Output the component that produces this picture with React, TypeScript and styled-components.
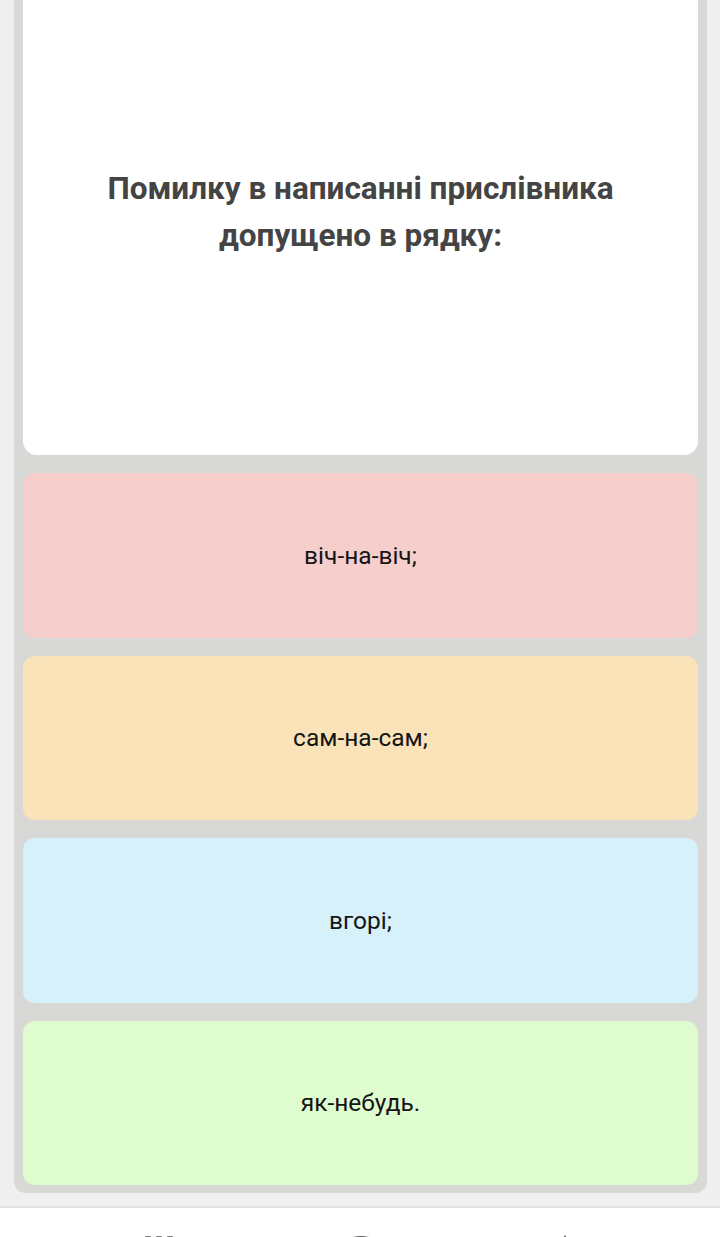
import React from "react";
import styled, { createGlobalStyle } from "styled-components";

const Global = createGlobalStyle`
  html, body { margin: 0; padding: 0; overflow: hidden; }
  body { background: #efefef; font-family: Roboto, "Noto Sans", Arial, sans-serif; }
`;

const Page = styled.div`
  width: 720px;
  height: 1237px;
  background: #efefef;
  display: flex;
  flex-direction: column;
  overflow: hidden;
`;

const Panel = styled.div`
  margin: -30px 13px 0 14px;
  padding: 0 9px 8px;
  background: #d8d8d6;
  border-radius: 0 0 12px 12px;
  display: flex;
  flex-direction: column;
  gap: 18px;
`;

const QuestionCard = styled.div`
  height: 485px;
  box-sizing: border-box;
  padding-bottom: 2px;
  background: #ffffff;
  border-radius: 0 0 14px 14px;
  display: flex;
  align-items: center;
  justify-content: center;
`;

const Question = styled.h1`
  margin: 0;
  font-family: Roboto, Arial, sans-serif;
  font-weight: 700;
  font-size: 31.5px;
  line-height: 47px;
  color: #444444;
  text-align: center;
`;

const Option = styled.div<{ $bg: string }>`
  height: 164.5px;
  background: ${(p) => p.$bg};
  border-radius: 12px;
  display: flex;
  align-items: center;
  justify-content: center;
  font-family: Roboto, Arial, sans-serif;
  font-size: 24.5px;
  color: #151515;
`;

const Spacer = styled.div`
  height: 13px;
  flex: none;
`;

const BottomNav = styled.nav`
  flex: none;
  height: 60px;
  background: #ffffff;
  border-top: 2px solid #e2e4e2;
  display: flex;
  padding-top: 27px;
  box-sizing: border-box;
`;

const NavRow = styled.div`
  position: relative;
  width: 100%;
  height: 20px;
`;

const Icon = styled.svg<{ $left: number }>`
  position: absolute;
  left: ${(p) => p.$left}px;
  top: 0;
`;

const options = [
  { text: "віч-на-віч;", bg: "#f6cfcd" },
  { text: "сам-на-сам;", bg: "#fae3b9" },
  { text: "вгорі;", bg: "#d7f1fa" },
  { text: "як-небудь.", bg: "#dffcce" },
];

export default function App() {
  return (
    <Page>
      <Global />
      <Panel>
        <QuestionCard>
          <Question>
            Помилку в написанні прислівника
            <br />
            допущено в рядку:
          </Question>
        </QuestionCard>
        {options.map((o) => (
          <Option key={o.text} $bg={o.bg}>
            {o.text}
          </Option>
        ))}
      </Panel>
      <Spacer />
      <BottomNav>
        <NavRow>
          <Icon $left={144} width="30" height="20" viewBox="0 0 30 20">
            <rect x="1" y="1" width="6" height="3" rx="1" fill="#7a7a7a" />
            <rect x="12" y="1" width="6" height="3" rx="1" fill="#7a7a7a" />
            <rect x="23" y="1" width="6" height="3" rx="1" fill="#7a7a7a" />
          </Icon>
          <Icon $left={347} width="28" height="20" viewBox="0 0 28 20">
            <path d="M3 3 Q14 -1 25 3 L25 6 L3 6 Z" fill="#5a5a5a" />
          </Icon>
          <Icon $left={560} width="10" height="20" viewBox="0 0 10 20">
            <path d="M5 0 L8 5 L2 5 Z" fill="#5a5a5a" />
          </Icon>
        </NavRow>
      </BottomNav>
    </Page>
  );
}
